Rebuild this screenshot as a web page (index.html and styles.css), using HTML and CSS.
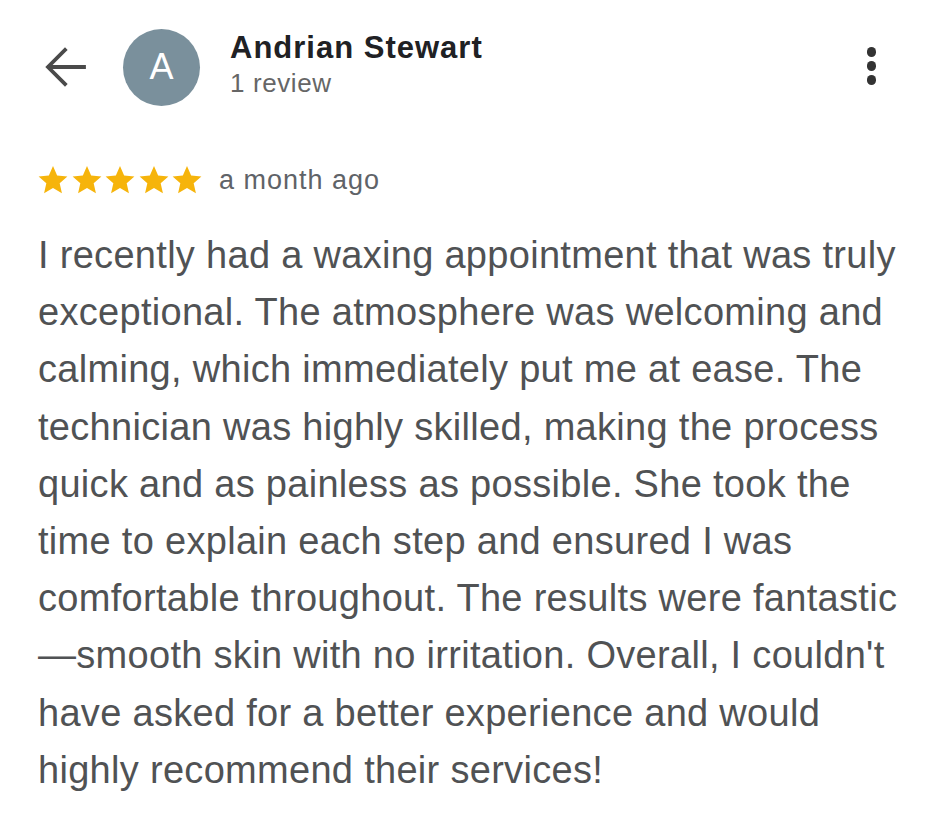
FILE: index.html
```html
<!DOCTYPE html>
<html>
<head>
<meta charset="utf-8">
<link rel="stylesheet" href="styles.css">
</head>
<body>
<div class="page">
  <header class="header">
    <svg class="back" width="42" height="42" viewBox="0 0 42 42"><path d="M40 21H5M21 4L4 21l17 17" fill="none" stroke="#4a4a4a" stroke-width="3.8" stroke-linecap="square" stroke-linejoin="miter"/></svg>
    <div class="avatar">A</div>
    <div class="who">
      <div class="name">Andrian Stewart</div>
      <div class="count">1 review</div>
    </div>
    <div class="more"><span></span><span></span><span></span></div>
  </header>
  <div class="meta">
    <div class="stars">
      <svg viewBox="0 0 24 24"><path d="M12 1.5l3.1 7.1 7.7.7-5.8 5.1 1.7 7.6L12 18l-6.7 4 1.7-7.6-5.8-5.1 7.7-.7z"/></svg>
      <svg viewBox="0 0 24 24"><path d="M12 1.5l3.1 7.1 7.7.7-5.8 5.1 1.7 7.6L12 18l-6.7 4 1.7-7.6-5.8-5.1 7.7-.7z"/></svg>
      <svg viewBox="0 0 24 24"><path d="M12 1.5l3.1 7.1 7.7.7-5.8 5.1 1.7 7.6L12 18l-6.7 4 1.7-7.6-5.8-5.1 7.7-.7z"/></svg>
      <svg viewBox="0 0 24 24"><path d="M12 1.5l3.1 7.1 7.7.7-5.8 5.1 1.7 7.6L12 18l-6.7 4 1.7-7.6-5.8-5.1 7.7-.7z"/></svg>
      <svg viewBox="0 0 24 24"><path d="M12 1.5l3.1 7.1 7.7.7-5.8 5.1 1.7 7.6L12 18l-6.7 4 1.7-7.6-5.8-5.1 7.7-.7z"/></svg>
    </div>
    <span class="when">a month ago</span>
  </div>
  <p class="text">I recently had a waxing appointment that was truly exceptional. The atmosphere was welcoming and calming, which immediately put me at ease. The technician was highly skilled, making the process quick and as painless as possible. She took the time to explain each step and ensured I was comfortable throughout. The results were fantastic —smooth skin with no irritation. Overall, I couldn't have asked for a better experience and would highly recommend their services!</p>
</div>
</body>
</html>
```
FILE: styles.css
```css
html, body {
  margin: 0;
  padding: 0;
  background: #ffffff;
}
body {
  font-family: "Liberation Sans", Arial, sans-serif;
}
.page {
  padding: 28px 30px 0 38px;
}
.header {
  display: flex;
  align-items: center;
  height: 78px;
}
.back {
  margin-left: 6px;
  margin-top: 0;
}
.avatar {
  width: 77px;
  height: 77px;
  border-radius: 50%;
  background: #7a909c;
  color: #ffffff;
  font-size: 36px;
  display: flex;
  align-items: center;
  justify-content: center;
  margin-left: 37px;
}
.who {
  margin-left: 30px;
  flex: 1;
  margin-top: -4px;
}
.name {
  font-weight: bold;
  font-size: 31px;
  letter-spacing: 1px;
  color: #202124;
  line-height: 36px;
}
.count {
  font-size: 26px;
  letter-spacing: 0.6px;
  color: #666666;
  line-height: 34px;
}
.more {
  display: flex;
  flex-direction: column;
  gap: 4.5px;
  margin-right: 32px;
  margin-top: -2px;
}
.more span {
  width: 9.5px;
  height: 9.5px;
  border-radius: 50%;
  background: #333333;
}
.meta {
  display: flex;
  align-items: center;
  margin-top: 58px;
}
.stars {
  display: flex;
  gap: 1.5px;
  margin-left: -1px;
}
.stars svg {
  width: 32px;
  height: 32px;
  fill: #f6b40b;
}
.when {
  font-size: 27px;
  letter-spacing: 1px;
  color: #5f6368;
  margin-left: 16px;
}
.text {
  margin: 31px 0 0 0;
  font-size: 38px;
  letter-spacing: 0.3px;
  line-height: 57.2px;
  color: #505254;
}
```
